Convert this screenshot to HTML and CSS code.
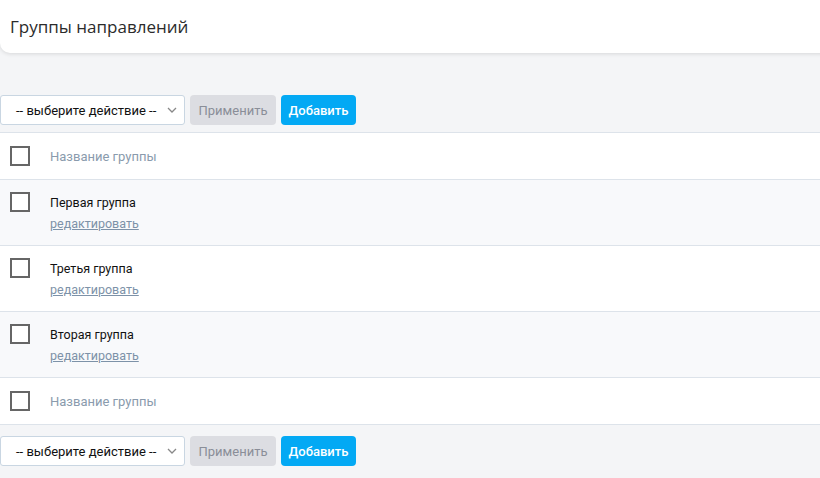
FILE: index.html
```html
<!DOCTYPE html>
<html lang="ru">
<head>
<meta charset="utf-8">
<link rel="stylesheet" href="styles.css">
</head>
<body>
<header class="page-head"><h1>Группы направлений</h1></header>
<div class="toolbar top">
  <div class="select">-- выберите действие --<svg class="chev" width="10" height="6" viewBox="0 0 10 6"><path d="M1 1l4 4 4-4" fill="none" stroke="#888" stroke-width="1.3"/></svg></div>
  <button class="btn apply">Применить</button>
  <button class="btn add">Добавить</button>
</div>
<div class="table">
  <div class="row head"><span class="cb"></span><div class="cell muted">Название группы</div></div>
  <div class="row item alt"><span class="cb"></span><div class="cell"><div class="name">Первая группа</div><a class="edit" href="#">редактировать</a></div></div>
  <div class="row item"><span class="cb"></span><div class="cell"><div class="name">Третья группа</div><a class="edit" href="#">редактировать</a></div></div>
  <div class="row item alt"><span class="cb"></span><div class="cell"><div class="name">Вторая группа</div><a class="edit" href="#">редактировать</a></div></div>
  <div class="row head"><span class="cb"></span><div class="cell muted">Название группы</div></div>
</div>
<div class="toolbar bottom">
  <div class="select">-- выберите действие --<svg class="chev" width="10" height="6" viewBox="0 0 10 6"><path d="M1 1l4 4 4-4" fill="none" stroke="#888" stroke-width="1.3"/></svg></div>
  <button class="btn apply">Применить</button>
  <button class="btn add">Добавить</button>
</div>
</body>
</html>
```
FILE: styles.css
```css
html, body { margin: 0; padding: 0; }
body {
  background: #f4f5f7;
  font-family: Roboto, "Noto Sans", sans-serif;
  font-size: 13px;
  color: #222;
  width: 820px;
  overflow: hidden;
}
.page-head {
  height: 53px;
  background: #fff;
  border-radius: 0 0 0 10px;
  box-shadow: 0 1px 4px rgba(0,0,0,0.12);
  display: flex;
  align-items: center;
  padding-left: 10px;
  margin-right: -20px;
}
.page-head h1 {
  margin: 0;
  font-family: "Open Sans", sans-serif;
  font-weight: 400;
  font-size: 17px;
  color: #2b2b2b;
}
.toolbar {
  display: flex;
  gap: 5px;
  height: 30px;
}
.toolbar.top { margin-top: 42px; margin-bottom: 7px; }
.toolbar.bottom { margin-top: 11px; }
.select {
  width: 185px;
  box-sizing: border-box;
  border: 1px solid #c9d6e2;
  border-radius: 3px;
  background: #fff;
  display: flex;
  align-items: center;
  justify-content: space-between;
  padding: 0 7px 0 15px;
  color: #111;
  font-size: 13px;
}
.btn {
  border: 0;
  border-radius: 4px;
  font-family: Roboto, "Noto Sans", sans-serif;
  font-size: 13px;
  padding: 0;
  height: 30px;
}
.apply { width: 86px; background: #dcdde2; color: #8a8e98; }
.add { width: 75px; background: #03a9f4; color: #fff; font-weight: 500; }
.table { border-top: 1px solid #dde3ea; }
.row {
  display: flex;
  align-items: flex-start;
  border-bottom: 1px solid #dde3ea;
  background: #fff;
  padding: 0 10px;
  box-sizing: border-box;
}
.row.head { height: 47px; align-items: center; }
.row.item { height: 66px; padding-top: 12px; }
.row.alt { background: #f8f9fb; }
.cb {
  width: 20px; height: 20px;
  box-sizing: border-box;
  border: 2px solid #666;
  background: #fff;
  flex: none;
}
.cell { margin-left: 20px; }
.muted { color: #8a9bad; }
.name { line-height: 20px; color: #111; font-size: 12.5px; margin-top: 1px; }
.edit {
  display: block;
  color: #7d92a8;
  text-decoration: underline;
  line-height: 21px;
  font-size: 12.5px;
}
```
